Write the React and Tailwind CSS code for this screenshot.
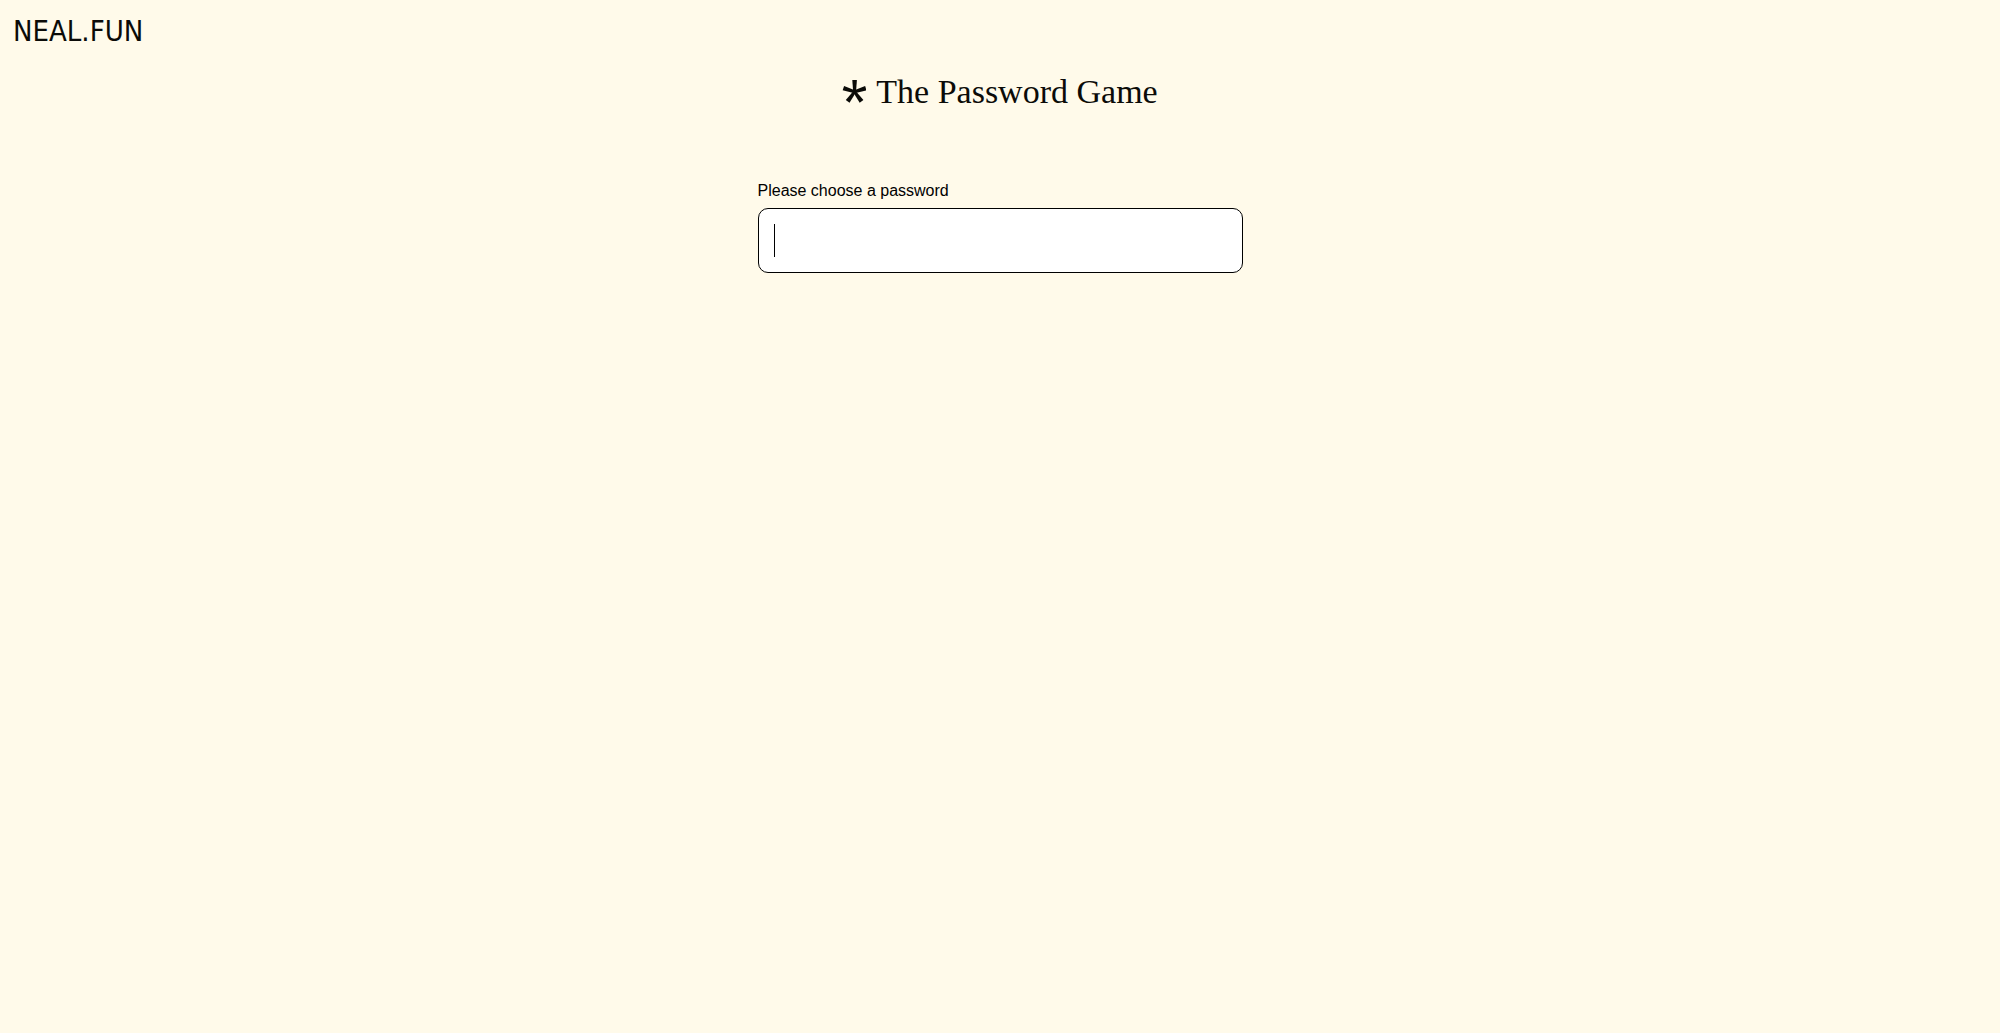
import { useState } from "react";

function Asterisk() {
  return (
    <svg className="h-6 w-6 shrink-0" viewBox="0 0 24 24" fill="#0b0b08" aria-hidden="true">
      {[0, 72, 144, 216, 288].map((angle) => (
        <path key={angle} d="M10.3 0H14.9L14 12.2H11.2Z" transform={`rotate(${angle} 12.6 11.8)`} />
      ))}
    </svg>
  );
}

export default function App() {
  const [password, setPassword] = useState("");

  return (
    <div className="min-h-screen bg-[#fffaea] font-['Liberation_Sans',Arial,sans-serif] text-black">
      <header className="flex h-[69px] items-start px-[13px] pt-3">
        <a href="/" className="font-['DejaVu_Sans_Condensed','DejaVu_Sans',sans-serif] text-[29px] leading-[38px] text-[#0b0b08]">
          NEAL.FUN
        </a>
      </header>
      <main className="flex flex-col items-center px-4">
        <h1 className="flex items-center gap-[10px] font-['Liberation_Serif',serif] text-[34px] leading-[46px] text-[#0b0b08]">
          <Asterisk />
          The Password Game
        </h1>
        <div className="mt-[66px] flex w-full max-w-[485px] flex-col gap-[7px]">
          <label htmlFor="password" className="text-base leading-5">
            Please choose a password
          </label>
          <div className="relative">
            <input
              id="password"
              type="text"
              autoComplete="off"
              value={password}
              onChange={(e) => setPassword(e.target.value)}
              className="block h-[65px] w-full rounded-[10px] border border-black bg-white px-[15px] text-[28px] outline-none"
            />
            {password === "" && (
              <span className="pointer-events-none absolute inset-y-4 left-4 w-px bg-black" aria-hidden="true" />
            )}
          </div>
        </div>
      </main>
    </div>
  );
}
